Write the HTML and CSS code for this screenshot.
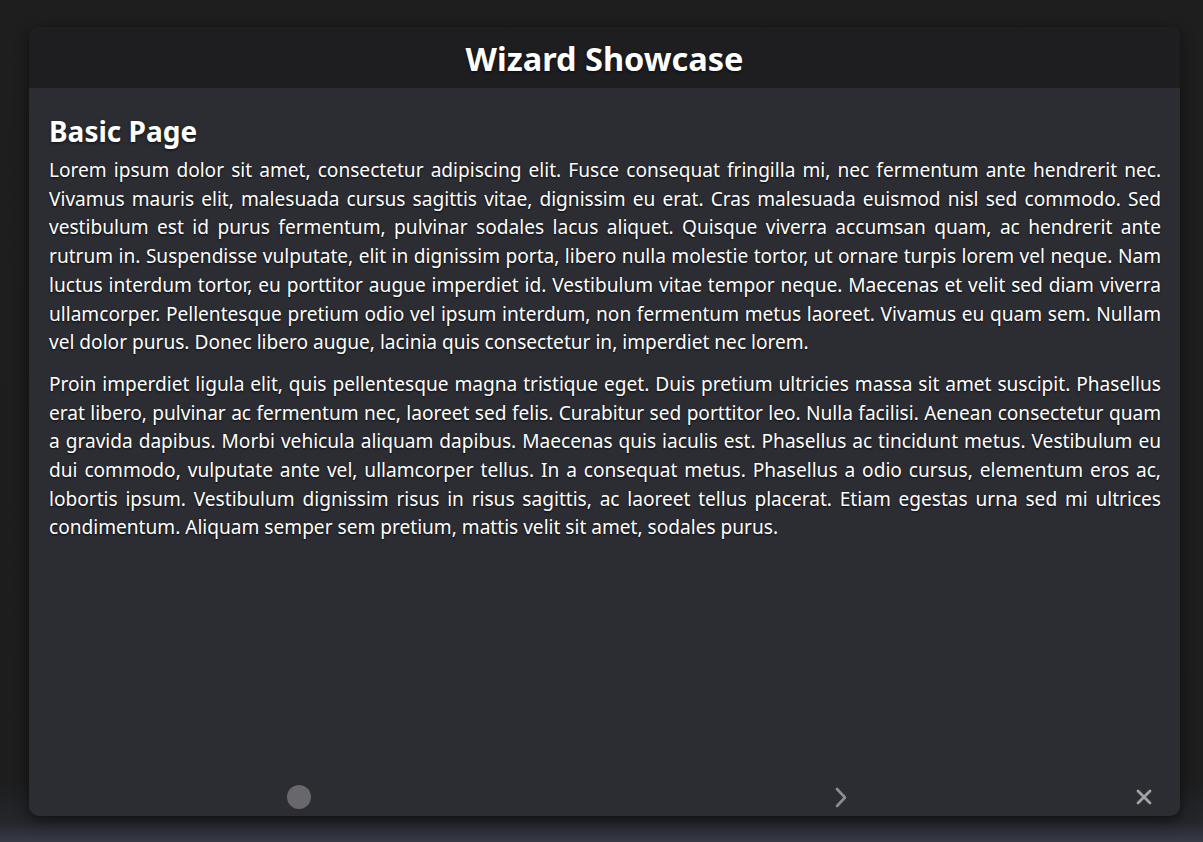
FILE: index.html
```html
<!DOCTYPE html>
<html lang="en">
<head>
<meta charset="utf-8">
<title>Wizard Showcase</title>
<link rel="stylesheet" href="styles.css">
</head>
<body>
<div class="backdrop">
  <div class="dialog">
    <header class="dialog-header"><h1 class="dialog-title">Wizard Showcase</h1></header>
    <main class="dialog-content">
      <h2 class="page-title">Basic Page</h2>
      <p class="para">Lorem ipsum dolor sit amet, consectetur adipiscing elit. Fusce consequat fringilla mi, nec fermentum ante hendrerit nec. Vivamus mauris elit, malesuada cursus sagittis vitae, dignissim eu erat. Cras malesuada euismod nisl sed commodo. Sed vestibulum est id purus fermentum, pulvinar sodales lacus aliquet. Quisque viverra accumsan quam, ac hendrerit ante rutrum in. Suspendisse vulputate, elit in dignissim porta, libero nulla molestie tortor, ut ornare turpis lorem vel neque. Nam luctus interdum tortor, eu porttitor augue imperdiet id. Vestibulum vitae tempor neque. Maecenas et velit sed diam viverra ullamcorper. Pellentesque pretium odio vel ipsum interdum, non fermentum metus laoreet. Vivamus eu quam sem. Nullam vel dolor purus. Donec libero augue, lacinia quis consectetur in, imperdiet nec lorem.</p>
      <p class="para">Proin imperdiet ligula elit, quis pellentesque magna tristique eget. Duis pretium ultricies massa sit amet suscipit. Phasellus erat libero, pulvinar ac fermentum nec, laoreet sed felis. Curabitur sed porttitor leo. Nulla facilisi. Aenean consectetur quam a gravida dapibus. Morbi vehicula aliquam dapibus. Maecenas quis iaculis est. Phasellus ac tincidunt metus. Vestibulum eu dui commodo, vulputate ante vel, ullamcorper tellus. In a consequat metus. Phasellus a odio cursus, elementum eros ac, lobortis ipsum. Vestibulum dignissim risus in risus sagittis, ac laoreet tellus placerat. Etiam egestas urna sed mi ultrices condimentum. Aliquam semper sem pretium, mattis velit sit amet, sodales purus.</p>
    </main>
    <footer class="dialog-footer">
      <span class="dot"></span>
      <svg class="next" width="12" height="21" viewBox="0 0 12 21"><path d="M2 2 L10 10.5 L2 19" fill="none" stroke="#8d8d91" stroke-width="2.6" stroke-linecap="round" stroke-linejoin="round"/></svg>
      <svg class="close" width="16" height="16" viewBox="0 0 16 16"><path d="M2 2 L14 14 M14 2 L2 14" fill="none" stroke="#a3a3a6" stroke-width="2.8" stroke-linecap="round"/></svg>
    </footer>
  </div>
</div>
</body>
</html>
```
FILE: styles.css
```css
html, body {
  margin: 0;
  padding: 0;
  height: 100%;
}
body {
  background: linear-gradient(to bottom, #1e1e1e 0px, #1d1d1e 780px, #24262c 822px, #383b46 842px);
  font-family: "Noto Sans", "Open Sans", sans-serif;
  color: #fff;
  overflow: hidden;
}
.backdrop {
  padding: 27px 0 0 29px;
}
.dialog {
  width: 1151px;
  height: 789px;
  border-radius: 10px;
  overflow: hidden;
  background: #2c2d33;
  display: flex;
  flex-direction: column;
  box-shadow: 0 4px 14px rgba(0,0,0,0.55);
}
.dialog-header {
  height: 61px;
  background: #1e1e20;
  display: flex;
  align-items: center;
  justify-content: center;
  flex-shrink: 0;
}
.dialog-title {
  margin: 0;
  font-size: 32.5px;
  font-weight: 700;
  line-height: 44px;
  text-shadow: 0 1px 3px rgba(0,0,0,0.7);
  position: relative;
  top: 1px;
}
.dialog-content {
  flex: 1;
  padding: 25px 19px 0 20px;
}
.page-title {
  margin: 0 0 7px 0;
  font-size: 28px;
  font-weight: 700;
  line-height: 36px;
  text-shadow: 0 1px 3px rgba(0,0,0,0.7);
}
.para {
  margin: 0 0 13px 0;
  font-size: 19.1px;
  line-height: 28.7px;
  text-align: justify;
  text-shadow: 0 1px 2px rgba(0,0,0,0.8);
}
.dialog-footer {
  height: 38px;
  display: flex;
  align-items: center;
  padding-left: 258px;
  flex-shrink: 0;
}
.dot {
  width: 24px;
  height: 24px;
  border-radius: 50%;
  background: #67676c;
  display: block;
}
.next {
  margin-left: 524px;
  display: block;
}
.close {
  margin-left: 289px;
  display: block;
}
```
